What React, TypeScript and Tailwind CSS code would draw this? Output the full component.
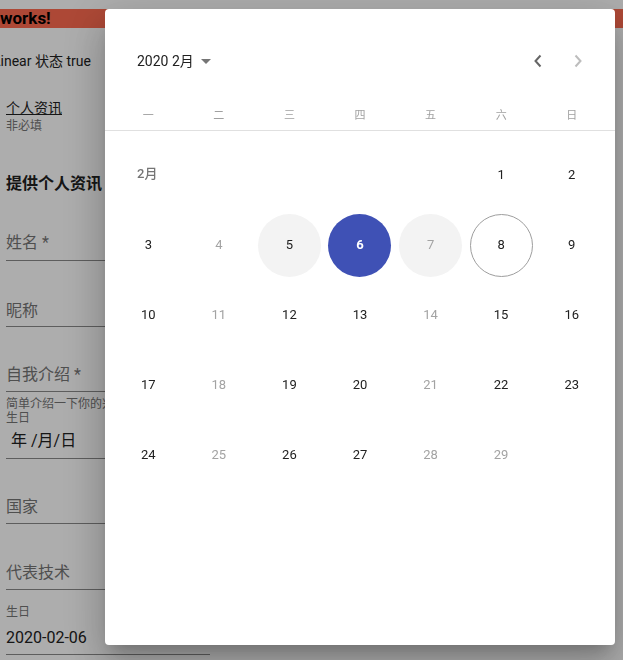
import React from "react";

const pageFont = { fontFamily: "Roboto, 'Noto Sans CJK SC', sans-serif" };

type Day = { n: number; muted?: boolean; selected?: boolean; soft?: boolean; today?: boolean };

const weekdays = ["一", "二", "三", "四", "五", "六", "日"];

const muted = [4, 7, 11, 14, 18, 21, 25, 28, 29];

function buildRows(): Day[][] {
  const days: Day[] = [];
  for (let n = 3; n <= 29; n++) {
    days.push({
      n,
      muted: muted.includes(n),
      selected: n === 6,
      soft: n === 5 || n === 7,
      today: n === 8,
    });
  }
  const rows: Day[][] = [];
  for (let i = 0; i < days.length; i += 7) rows.push(days.slice(i, i + 7));
  return rows;
}

function DayCell({ d }: { d: Day }) {
  let cls = "text-[#212121]";
  if (d.muted) cls = "text-[#a3a3a3]";
  if (d.soft) cls += " bg-[#f3f3f3]";
  if (d.selected) cls = "bg-[#3f51b5] text-white font-bold";
  if (d.today) cls += " border border-[#9e9e9e]";
  return (
    <div className="h-[70px] flex items-center justify-center">
      <div className={`w-[63px] h-[63px] rounded-full flex items-center justify-center text-[13px] ${cls}`}>
        {d.n}
      </div>
    </div>
  );
}

function Chevron({ dir, color }: { dir: "left" | "right"; color: string }) {
  return (
    <svg width="10" height="14" viewBox="0 0 10 14" className="block">
      <polyline
        points={dir === "left" ? "7.5,1.5 2.5,7 7.5,12.5" : "2.5,1.5 7.5,7 2.5,12.5"}
        fill="none"
        stroke={color}
        strokeWidth="2"
      />
    </svg>
  );
}

function Calendar() {
  const rows = buildRows();
  return (
    <div
      className="fixed left-[105px] top-[9px] w-[510px] h-[636px] bg-white rounded-[4px] shadow-[0_11px_15px_-7px_rgba(0,0,0,0.2),0_24px_38px_3px_rgba(0,0,0,0.14),0_9px_46px_8px_rgba(0,0,0,0.12)]"
      style={{ fontFamily: "Roboto, 'Noto Sans CJK SC', sans-serif" }}
    >
      {/* header */}
      <div className="mt-[40px] h-[24px] flex items-center pl-[32px] pr-[32px]">
        <div className="flex items-center text-[14px] text-[#212121]">
          <span>2020 2月</span>
          <svg width="10" height="5" viewBox="0 0 10 5" className="ml-[7px] mt-[1px]">
            <polygon points="0,0 10,0 5,5" fill="#757575" />
          </svg>
        </div>
        <div className="ml-auto flex items-center gap-[30px]">
          <Chevron dir="left" color="#666666" />
          <Chevron dir="right" color="#bdbdbd" />
        </div>
      </div>

      {/* weekdays */}
      <div className="mt-[35px] grid grid-cols-7 px-[8px] h-[16px] items-center">
        {weekdays.map((w) => (
          <div key={w} className="text-center text-[11px] text-[#a0a0a0]">
            {w}
          </div>
        ))}
      </div>
      <div className="mt-[6px] h-px bg-[#e0e0e0]" />

      {/* days */}
      <div className="mt-[9px] px-[8px] grid grid-cols-7">
        <div className="col-span-5 h-[70px] flex items-center pl-[24px] pb-[2px] text-[13px] font-medium text-[#757575]">
          2月
        </div>
        <DayCell d={{ n: 1 }} />
        <DayCell d={{ n: 2 }} />
        {rows.map((r) => r.map((d) => <DayCell key={d.n} d={d} />))}
      </div>
    </div>
  );
}

function Field({ label, mt, lineMt }: { label: string; mt: string; lineMt: string }) {
  return (
    <>
      <div className={`${mt} h-[24px] leading-[24px] text-[16px] text-[#757575]`}>{label}</div>
      <div className={`${lineMt} h-px w-[204px] bg-[#8a8a8a]`} />
    </>
  );
}

export default function App() {
  return (
    <div className="relative h-[660px] overflow-hidden bg-white" style={pageFont}>
      <div className="h-[9px]" />
      <div className="h-[19px] bg-[#ff6b50] text-[17px] leading-[19px] font-bold text-black">works!</div>

      <div className="pl-[6px]">
        <div className="-ml-[13px] mt-[23px] h-[20px] leading-[20px] text-[14px] text-[#212121]">Linear 状态 true</div>

        <div className="mt-[27px] h-[20px] leading-[20px] text-[14px] text-[#212121] underline">个人资讯</div>
        <div className="h-[16px] leading-[16px] text-[12px] text-[#757575]">非必填</div>

        <div className="mt-[38px] h-[24px] leading-[24px] text-[16px] font-bold text-[#212121]">提供个人资讯</div>

        <Field label="姓名 *" mt="mt-[35px]" lineMt="mt-[5px]" />
        <Field label="昵称" mt="mt-[38px]" lineMt="mt-[3px]" />
        <Field label="自我介绍 *" mt="mt-[36px]" lineMt="mt-[4px]" />

        <div className="mt-[5px] h-[14px] leading-[14px] text-[12px] text-[#757575] whitespace-nowrap">简单介绍一下你的兴趣爱好</div>
        <div className="h-[14px] leading-[14px] text-[12px] text-[#757575]">生日</div>
        <div className="mt-[4px] pl-[5px] h-[24px] leading-[24px] text-[16px] text-[#212121]">年 /月/日</div>
        <div className="mt-[5px] h-px w-[204px] bg-[#8a8a8a]" />

        <Field label="国家" mt="mt-[36px]" lineMt="mt-[4px]" />
        <Field label="代表技术" mt="mt-[37px]" lineMt="mt-[4px]" />

        <div className="mt-[14px] h-[16px] leading-[16px] text-[12px] text-[#757575]">生日</div>
        <div className="mt-[6px] h-[24px] leading-[24px] text-[16px] text-[#212121]">2020-02-06</div>
        <div className="mt-[4px] h-px w-[204px] bg-[#8a8a8a]" />
      </div>

      {/* backdrop */}
      <div className="fixed inset-0 bg-black/[0.32]" />
      <Calendar />
    </div>
  );
}
